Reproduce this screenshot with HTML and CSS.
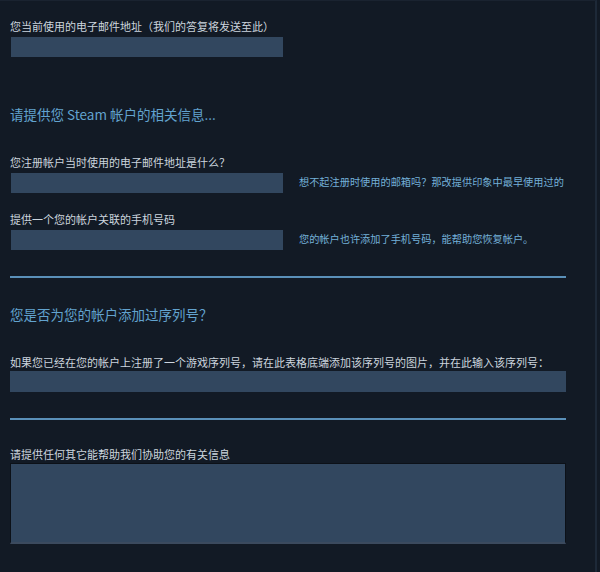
FILE: index.html
```html
<!DOCTYPE html>
<html lang="zh-CN">
<head>
    <meta charset="UTF-8">
    <meta name="viewport" content="width=device-width, initial-scale=1.0">
    <title>Steam 帐户找回</title>
    <link rel="stylesheet" href="styles.css">
</head>
<body>
    <div class="page">
        <div class="form">
            <label class="field-label first">您当前使用的电子邮件地址（我们的答复将发送至此）</label>
            <input type="text" class="field short">

            <h2 class="section-title">请提供您 Steam 帐户的相关信息...</h2>

            <label class="field-label after-title">您注册帐户当时使用的电子邮件地址是什么？</label>
            <div class="field-row">
                <input type="text" class="field short">
                <span class="field-help">想不起注册时使用的邮箱吗？那改提供印象中最早使用过的</span>
            </div>

            <label class="field-label">提供一个您的帐户关联的手机号码</label>
            <div class="field-row">
                <input type="text" class="field short">
                <span class="field-help">您的帐户也许添加了手机号码，能帮助您恢复帐户。</span>
            </div>

            <div class="divider"></div>

            <h2 class="section-title second">您是否为您的帐户添加过序列号？</h2>

            <label class="field-label tight">如果您已经在您的帐户上注册了一个游戏序列号，请在此表格底端添加该序列号的图片，并在此输入该序列号：</label>
            <input type="text" class="field full">

            <div class="divider"></div>

            <label class="field-label tight last">请提供任何其它能帮助我们协助您的有关信息</label>
            <textarea class="field area"></textarea>
        </div>
    </div>
</body>
</html>
```

FILE: styles.css
```css
* {
    box-sizing: border-box;
}
html, body {
    margin: 0;
    padding: 0;
    height: 100%;
}
body {
    background-color: #121a25;
    font-family: "Noto Sans CJK SC", "Noto Sans", sans-serif;
    overflow: hidden;
}
.page {
    width: 597px;
    height: 100%;
    border-right: 2px solid #1d2938;
    border-top: 1px solid #1a2330;
}
.form {
    padding: 0 0 0 10px;
    width: 566px;
    display: flex;
    flex-direction: column;
    align-items: flex-start;
}
.field-label {
    display: block;
    color: #ccd5de;
    font-size: 11px;
    line-height: 18px;
    height: 18px;
    margin-top: 17px;
    white-space: nowrap;
}
.field-label.first {
    margin-top: 16px;
}
.field-label.after-title {
    margin-top: 30px;
}
.field-label.tight {
    margin-top: 30px;
}
.field-label.last {
    margin-top: 25px;
}
.field {
    display: block;
    background-color: #32475f;
    border: none;
    outline: none;
    margin: 2px 0 0 1px;
    height: 20px;
    padding: 0;
    color: #ffffff;
    font-family: inherit;
}
.field.short {
    width: 272px;
}
.field-row .field {
    margin-top: 0;
}
.field.full {
    width: 556px;
    height: 21px;
    margin: 0;
}
.field.area {
    width: 556px;
    height: 81px;
    margin: 0;
    border: 1px solid #0c1118;
    border-bottom: 2px solid #3b4a5e;
    resize: none;
}
.field-row {
    display: flex;
    align-items: center;
    gap: 16px;
    margin-top: 2px;
}
.field-help {
    color: #74b0d8;
    font-size: 10.2px;
    line-height: 14px;
    white-space: nowrap;
    position: relative;
    top: -1px;
}
.section-title {
    margin: 48px 0 0 0;
    color: #62a3cf;
    font-size: 13.5px;
    line-height: 18px;
    font-weight: normal;
}
.section-title.second {
    margin-top: 27px;
}
.divider {
    width: 556px;
    height: 2px;
    margin-top: 26px;
    background-color: #5a90b9;
}
```
